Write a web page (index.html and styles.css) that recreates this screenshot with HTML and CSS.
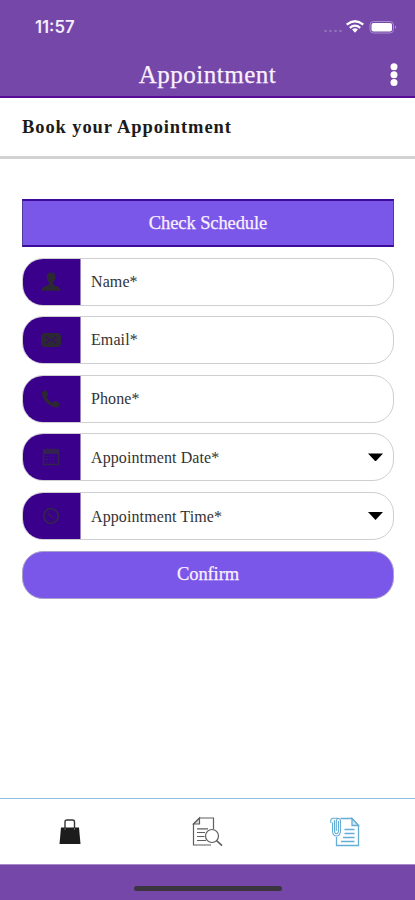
FILE: index.html
```html
<!DOCTYPE html>
<html lang="en">
<head>
<meta charset="utf-8">
<title>Appointment</title>
<link rel="stylesheet" href="styles.css">
</head>
<body>
<div class="app">
  <header class="top">
    <div class="status">
      <span class="clock">11:57</span>
      <svg class="signals" width="78" height="18" viewBox="0 0 78 18">
        <g fill="#9272bd"><circle cx="3.5" cy="13" r="1.300"/><circle cx="8.5" cy="13" r="1.300"/><circle cx="13.5" cy="13" r="1.300"/><circle cx="18.5" cy="13" r="1.300"/></g>
        <g fill="none" stroke="#fff" stroke-width="2.300"><path d="M24.700 6.600Q33-.1 41.300 6.600"/><path d="M27.800 9.800Q33 5.500 38.200 9.800"/></g>
        <path d="M30.100 11.400Q33 9 35.900 11.400L33 14.800Z" fill="#fff"/>
        <rect x="48" y="3.500" width="23.500" height="11.500" rx="3.500" fill="none" stroke="#a88bd0"/>
        <rect x="49.500" y="5" width="20.500" height="8.600" rx="2" fill="#fff"/>
        <path d="M73 7.500q2 1.700 0 3.400z" fill="#b79ed8"/>
      </svg>
    </div>
    <div class="titlebar">
      <h1>Appointment</h1>
      <svg class="more" width="8" height="24" viewBox="0 0 8 24" fill="#fff"><circle cx="4" cy="3.800" r="3.500"/><circle cx="4" cy="11.700" r="3.500"/><circle cx="4" cy="19.500" r="3.500"/></svg>
    </div>
  </header>
  <h2>Book your Appointment</h2>
  <main>
    <button class="check">Check Schedule</button>
    <div class="field">
      <span class="icon"><svg width="20" height="20" viewBox="0 0 20 20" fill="#2c2933"><path d="M10 .5c-3.200 0-4.500 2-4.300 4.900.1 2 .9 3.700 2.200 4.700v2.300c-1.200 1.400-7.400 1.400-7.500 6.300h19.200c-.1-4.900-6.300-4.900-7.500-6.300v-2.300c1.300-1 2.100-2.700 2.200-4.700.2-2.900-1.100-4.900-4.300-4.900z"/></svg></span>
      <span class="label">Name*</span>
    </div>
    <div class="field">
      <span class="icon"><svg width="22" height="18" viewBox="0 0 22 18"><rect x="1" y="2" width="20" height="14" rx="4" fill="#2c2933"/><path d="M5.500 5.500l5.500 4.500 5.500-4.500M5.500 12.800l3-3M16.500 12.800l-3-3" fill="none" stroke="#3a0878" stroke-width="1.200"/></svg></span>
      <span class="label">Email*</span>
    </div>
    <div class="field">
      <span class="icon"><svg width="20" height="20" viewBox="0 0 20 20"><path d="M2 2.500L3.700 1.100c.7-.4 1.200-.1 1.500.6l1.700 3.400c.3.700.1 1.200-.4 1.600L5.400 7.900c1.500 2.500 3.400 4.300 6.300 5.800l1.300-1.300c.5-.5 1-.6 1.600-.3l3.300 1.600c.7.400.9.900.7 1.500l-1 2.300c-.4.900-1 1.200-2 1C8 17.300 1.500 11.500.900 4.200c0-.8.400-1.300 1.100-1.700z" fill="#2c2933"/></svg></span>
      <span class="label">Phone*</span>
    </div>
    <div class="field">
      <span class="icon"><svg width="18" height="20" viewBox="0 0 18 20" fill="none" stroke="#34224f"><rect x="1.500" y="3" width="15" height="14.500" stroke-width="1.600"/><path d="M1.500 3.500h15v3h-15z" fill="#34224f"/><path d="M5 1v4M9 1v4M13 1v4"/><path d="M4 9.500h10M4 12.500h10M4 15h10" stroke-dasharray="2 1.500" stroke="#371b62"/></svg></span>
      <span class="label low">Appointment Date*</span>
      <i class="arrow"></i>
    </div>
    <div class="field">
      <span class="icon"><svg width="18" height="18" viewBox="0 0 18 18" fill="none" stroke="#34224f"><circle cx="9" cy="9" r="7.300" stroke-width="1.800"/><circle cx="9" cy="9" r="4.900" stroke-dasharray="1 1.500"/><path d="M6 6.500l3 2.800 3 1.700" stroke-width="1.300"/></svg></span>
      <span class="label low">Appointment Time*</span>
      <i class="arrow"></i>
    </div>
    <button class="confirm">Confirm</button>
  </main>
  <nav>
    <a><svg width="24" height="28" viewBox="0 0 24 28"><path d="M7 10V4Q7 2 9 2h5.500q2 0 2 2V10" fill="none" stroke="#333" stroke-width="1.400"/><path d="M3 9.500h18l1.500 16.500h-21z" fill="#1c1c1c"/><path d="M7 10v2M16.500 10v2" stroke="#666"/></svg></a>
    <a><svg width="32" height="32" viewBox="0 0 32 32" fill="none" stroke="#5e5e5e" stroke-width="1.200"><path d="M20 29H2.500V8l6-6H22.500V13"/><path d="M2.500 8h6V2z" fill="#ddd"/><path d="M6 12.800h11M6 16.500h8M6 20.500h7.500M6 24.500h9"/><circle cx="21" cy="20" r="6.500" fill="#fff"/><path d="M25.500 24.500l5.500 5.200" stroke-width="1.700"/></svg></a>
    <a><svg width="30" height="30" viewBox="0 0 30 30" fill="none" stroke="#66add5" stroke-width="1.300"><path d="M10.500 1.500H22l6.500 7V28.500h-22V20"/><path d="M22 1.500v7h6.500z" fill="#d8edf8"/><path d="M14.500 12.500h10M14.500 16.500h10M13 20.500h11.500M11 24.500h13.500"/><path d="M2.500 5.500v9q.5 4.500 4 4.500t4-4.500V4.500q0-3-2-3t-2.200 3v9.500M.800 6V3.500q0-2.300 2.500-2.300h5M4.500 3v11q.3 2.700 2 2.700t2-2.700V4" stroke-width="1.100"/></svg></a>
  </nav>
  <footer><div class="home"></div></footer>
</div>
</body>
</html>
```
FILE: styles.css
```css
* { box-sizing: border-box; }
body { margin: 0; background: #fff; font-family: "Liberation Serif", serif; color: #1c1c1c; }
.app { height: 900px; width: 415px; display: flex; flex-direction: column; overflow: hidden; }
.top { height: 98px; background: #7447a8; border-bottom: 2px solid #590b95; flex: none; }
.status { height: 54px; padding: 0 15px 0 35px; display: flex; justify-content: space-between; align-items: center; }
.clock { font: 600 16.700px/20px Inter, sans-serif; color: #f5eefc; }
.signals { margin-top: -1px; }
.titlebar { height: 42px; display: grid; grid-template-columns: 1fr auto 1fr; align-items: center; padding: 0 17px; }
h1 { grid-column: 2; margin: 0; font-size: 25px; line-height: 42px; font-weight: normal; color: #fbf0ff; letter-spacing: .5px; -webkit-text-stroke: .25px #fbf0ff; }
.more { justify-self: end; }
h2 { margin: 0; flex: none; height: 61px; padding-left: 22px; border-bottom: 3px solid #d2d2d2; font-size: 18.500px; line-height: 58px; letter-spacing: .9px; color: #1b1b1b; }
main { padding: 40px 21px 0 22px; flex: 1; display: flex; flex-direction: column; gap: 10.600px; }
button { font-family: inherit; font-size: 18.500px; color: #faf0ff; background: #7a57e8; padding: 0; letter-spacing: -.1px; -webkit-text-stroke: .25px #faf0ff; }
.check { height: 48px; border: 1px solid #4f3b9d; border-top: 2px solid #3d0b99; border-bottom: 2px solid #3d0b99; }
.confirm { height: 48px; border: 1px solid #aaa0cc; border-radius: 21px; }
.field { height: 48px; display: flex; align-items: center; border: 1px solid #cfcfd2; border-radius: 21px; overflow: hidden; padding-right: 10px; }
.icon { width: 58px; height: 100%; background: #3b008b; border-right: 1px solid #9a83bd; padding-right: 2px; display: flex; align-items: center; justify-content: center; flex: none; }
.label { margin-left: 10px; flex: 1; font-size: 16px; letter-spacing: .1px; color: #333; }
.low { padding-top: 2px; }
.arrow { width: 15px; height: 8px; background: #000; clip-path: polygon(0 0, 100% 0, 50% 100%); }
nav { flex: none; height: 66px; border-top: 1px solid #8fbfe0; display: grid; grid-template-columns: repeat(3, 1fr); }
nav a { display: flex; align-items: center; justify-content: center; padding-left: 2px; }
nav a:nth-child(2) { padding: 0 1px 0 0; }
nav a:nth-child(3) { padding: 0 2px 0 0; }
footer { flex: none; height: 36px; background: #7447a8; border-top: 1px solid #a98bca; padding-top: 21px; }
.home { width: 148px; height: 5px; border-radius: 3px; background: #3b3540; margin: 0 auto; }
```
